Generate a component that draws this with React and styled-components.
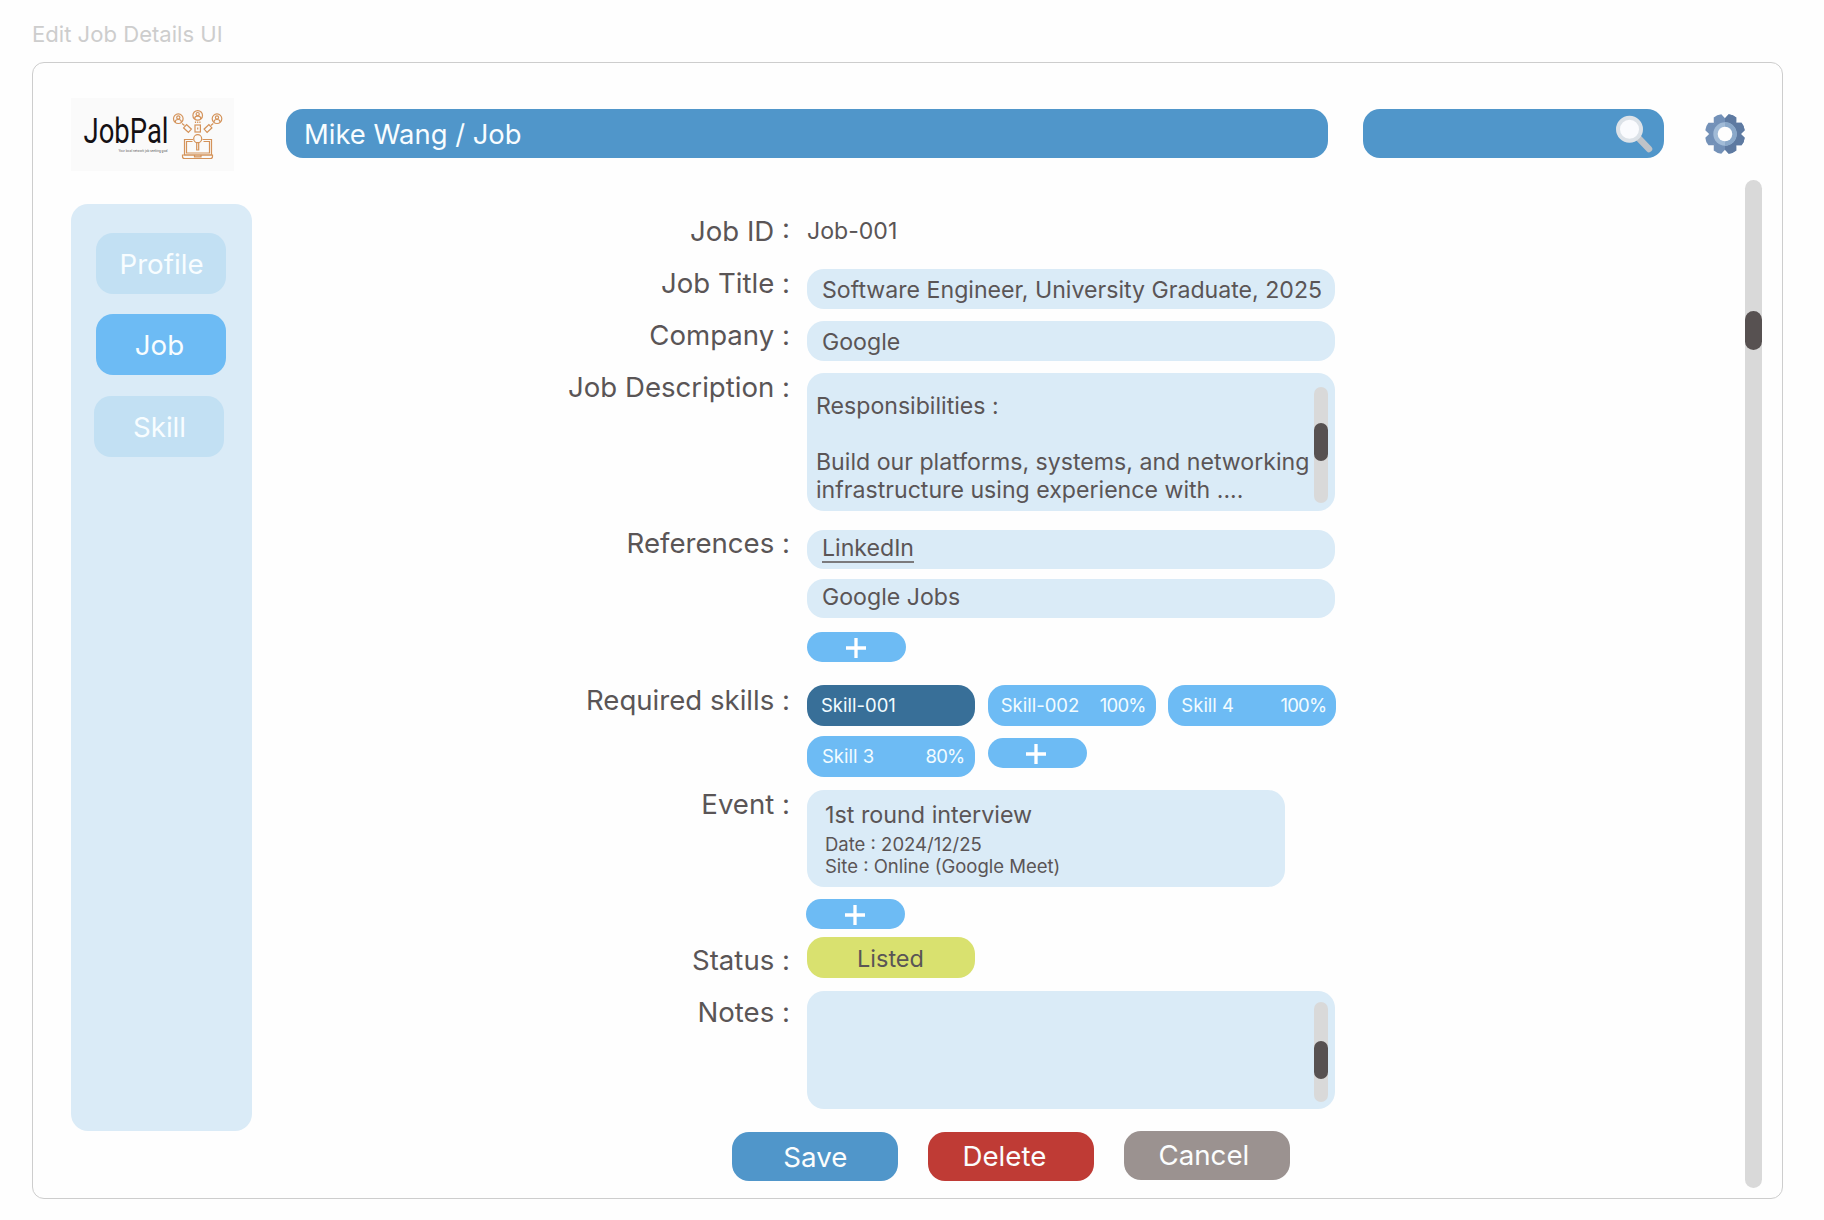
import React from "react";
import styled, { createGlobalStyle } from "styled-components";

const GlobalStyle = createGlobalStyle`
  * { box-sizing: border-box; }
  body {
    margin: 0;
    background: #fefefe;
    color: #5a5556;
    font-family: Inter, "Liberation Sans", sans-serif;
  }
  button { font: inherit; border: 0; padding: 0; cursor: pointer; }
`;

const Screen = styled.div`
  width: 1824px;
  height: 1220px;
  padding: 0 41px 0 32px;
  overflow: hidden;
`;

const ScreenTitle = styled.h1`
  margin: 0;
  height: 62px;
  padding-top: 17px;
  font-size: 22.1px;
  font-weight: 400;
  line-height: 34px;
  color: #cdcdcd;
`;

const Frame = styled.main`
  height: 1137px;
  border: 1px solid #cdcdcd;
  border-radius: 12px;
  padding: 35px 20px 0 38px;
`;

const Header = styled.header`
  display: flex;
  align-items: flex-start;
  height: 73px;
`;

const LogoBox = styled.div`
  width: 163px;
  height: 73px;
  background: #fafafa;
  margin-right: 52px;
`;

const Breadcrumb = styled.div`
  width: 1042px;
  height: 49px;
  margin: 11px 35px 0 0;
  padding-left: 18px;
  border-radius: 17px;
  background: #5096ca;
  color: #f8fdff;
  font-size: 27.4px;
  line-height: 51px;
`;

const SearchBar = styled.div`
  display: flex;
  justify-content: flex-end;
  align-items: center;
  width: 301px;
  height: 49px;
  margin: 11px 41px 0 0;
  padding-right: 10px;
  border-radius: 17px;
  background: #5096ca;
`;

const SettingsButton = styled.button`
  display: flex;
  width: 40px;
  height: 40px;
  margin-top: 16px;
  background: none;
`;

const Body = styled.div`
  display: flex;
  align-items: flex-start;
  padding-top: 9px;
`;

const Sidebar = styled.nav`
  display: flex;
  flex-direction: column;
  gap: 20.3px;
  width: 181.4px;
  height: 927px;
  margin-top: 24px;
  padding: 29px 0 0 25px;
  border-radius: 17px;
  background: #daebf7;
`;

const NavButton = styled.button`
  width: 130px;
  height: 61px;
  border-radius: 17px;
  background: ${(p) => (p.$active ? "#6dbbf4" : "#c2e0f3")};
  color: #f8fdff;
  font-size: 27.7px;
  line-height: 62px;
  margin-left: ${(p) => p.$outdent || 0}px;
  padding: ${(p) => p.$padding || "0 0 0 1px"};
`;

const Form = styled.form`
  width: 1492.6px;
  padding-top: 25px;
`;

const FormRow = styled.section`
  display: grid;
  grid-template-columns: 537.6px 1fr;
  column-gap: 17px;
  height: ${(p) => p.$height}px;
`;

const Label = styled.label`
  padding-top: 9px;
  font-size: 27.6px;
  line-height: 34px;
  text-align: right;
`;

const Content = styled.div`
  display: flex;
  flex-direction: column;
  align-items: flex-start;
  gap: ${(p) => p.$gap || 0}px;
  padding-top: ${(p) => p.$top}px;
`;

const PlainValue = styled.span`
  font-size: 23.1px;
  line-height: 28px;
`;

const Field = styled.div`
  width: 528px;
  height: ${(p) => p.$height || 39}px;
  padding: ${(p) => p.$padTop || 0}px 0 0 15px;
  border-radius: 17px;
  background: #daebf7;
  font-size: 23.13px;
  line-height: ${(p) => p.$line || 39}px;
`;

const LinkText = styled.a`
  display: inline-block;
  height: 33px;
  border-bottom: 2px solid #7b7a7c;
  line-height: 37px;
`;

const TextArea = styled.div`
  display: flex;
  justify-content: space-between;
  width: 528px;
  height: ${(p) => p.$height}px;
  padding: ${(p) => p.$top}px 7px 0 9px;
  border-radius: 17px;
  background: #daebf7;
`;

const Paragraph = styled.div`
  padding-top: 5px;
  font-size: 23.13px;
  line-height: 28px;
  white-space: pre;
`;

const Track = styled.div`
  flex: none;
  width: ${(p) => p.$width}px;
  height: ${(p) => p.$height}px;
  margin-left: auto;
  padding-top: ${(p) => p.$offset}px;
  border-radius: 9px;
  background: #d9d9d9;
`;

const Thumb = styled.div`
  height: ${(p) => p.$height}px;
  border-radius: 9px;
  background: #575151;
`;

const AddButton = styled.button`
  display: flex;
  align-items: center;
  justify-content: center;
  width: 99.5px;
  height: 30px;
  padding: 1px 2px 0 0;
  margin: ${(p) => p.$margin || "0"};
  border-radius: 15px;
  background: #6dbbf4;
`;

const SkillGrid = styled.div`
  display: grid;
  grid-template-columns: repeat(3, 168px);
  gap: 10px 12.7px;
`;

const SkillChip = styled.div`
  display: flex;
  justify-content: space-between;
  height: 41px;
  padding: 0 ${(p) => p.$right || 10}px 0 ${(p) => p.$left || 13}px;
  border-radius: 17px;
  background: ${(p) => (p.$selected ? "#386f98" : "#6dbbf4")};
  color: #f2fcff;
  font-size: 18.5px;
  line-height: 41px;
`;

const Percent = styled.span`
  letter-spacing: -0.8px;
`;

const EventCard = styled.article`
  width: 478.4px;
  height: 97px;
  padding: 10px 0 0 18px;
  border-radius: 17px;
  background: #daebf7;
`;

const EventTitle = styled.div`
  height: 33px;
  font-size: 23.3px;
  line-height: 29px;
`;

const EventLine = styled.div`
  font-size: 18.5px;
  line-height: 22px;
`;

const StatusTag = styled.div`
  width: 168px;
  height: 41px;
  padding-right: 1px;
  border-radius: 17px;
  background: #d9e16f;
  font-size: 23.5px;
  line-height: 43px;
  text-align: center;
`;

const Actions = styled.div`
  display: flex;
  gap: 30px;
  padding: 14px 0 0 480px;
`;

const ActionButton = styled.button`
  width: 166px;
  height: 49px;
  padding: ${(p) => p.$padding};
  margin-top: ${(p) => p.$drop || 0}px;
  border-radius: 17px;
  background: ${(p) => p.$color};
  color: #fbfdfd;
  font-size: 27.7px;
  line-height: 48px;
`;

const Wordmark = styled.text`
  font-family: Roboto, sans-serif;
  font-size: 35px;
  fill: #141014;
`;

const Tagline = styled.text`
  font-family: Inter, sans-serif;
  font-size: 3.6px;
  fill: #555;
`;

const PersonBadge = ({ x, y }) => (
  <g transform={`translate(${x} ${y})`}>
    <circle r="4.8" />
    <circle cy="-1.3" r="1.6" />
    <path d="M-2.9 3.6V2.4Q-2.6.8 0 .8T2.9 2.4V3.6" />
  </g>
);

const Logo = () => (
  <svg width="163" height="73" viewBox="0 0 163 73">
    <Wordmark x="12.500" y="44.500" textLength="85" lengthAdjust="spacingAndGlyphs">JobPal</Wordmark>
    <Tagline x="47.500" y="53.500" textLength="49" lengthAdjust="spacingAndGlyphs">
      Your local network job seeking goal
    </Tagline>
    <g fill="none" stroke="#d4935a" strokeWidth="1.2">
      <PersonBadge x={107.3} y={20.7} />
      <PersonBadge x={126.7} y={17.4} />
      <PersonBadge x={146} y={20.7} />
      <path d="M111 25.500l2.500 2M142.300 25.500l-2.500 2M124.500 23.500v1.500M126.700 23.500v1.500M128.900 23.500v1.500" />
      <rect x="-3.300" y="-2.200" width="6.600" height="4.400" transform="translate(116.500 30.500) rotate(43)" />
      <rect x="-3.300" y="-2.200" width="6.600" height="4.400" transform="translate(137 30.500) rotate(-43)" />
      <rect x="124" y="27" width="5.400" height="7" />
      <path d="M126.700 29.500v2" />
      <path d="M122 41.500h-8.500v15.500h27v-15.500h-9M121.500 43.500h-6v11.500h23v-11.500h-6" />
      <path d="M111.500 57h30v1.500q0 2-2 2h-26q-2 0-2-2zM123.500 57.500v1.300h6.500v-1.300" />
      <circle cx="126.700" cy="40.700" r="4" />
      <path d="M125.700 45v7h2v-7" />
    </g>
  </svg>
);

const SearchIcon = () => (
  <svg width="38" height="38" viewBox="0 0 38 38">
    <path d="M22.500 23l10.500 11" stroke="#bfc3c8" strokeWidth="6.500" strokeLinecap="round" />
    <circle cx="13.500" cy="14.300" r="11.500" fill="#fafbfe" stroke="#dce2e8" strokeWidth="4" />
  </svg>
);

const gearTooth = "M-6.300-14L-4.100-19.600Q0-21 4.100-19.600L6.300-14Z";
const GearIcon = () => (
  <svg width="40" height="40" viewBox="-20 -20 40 40">
    <defs>
      <clipPath id="gear-right"><rect x="0" y="-20" width="20" height="40" /></clipPath>
      <g id="gear-body">
        <circle r="15.300" />
        {[22.5, 67.5, 112.5, 157.5, 202.5, 247.5, 292.5, 337.5].map((a) => (
          <path key={a} d={gearTooth} transform={`rotate(${a})`} />
        ))}
      </g>
    </defs>
    <use href="#gear-body" fill="#7391b8" />
    <use href="#gear-body" fill="#5e7aa1" clipPath="url(#gear-right)" />
    <circle r="11.700" fill="#a1bbd7" />
    <circle r="11.700" fill="#8aa8c9" clipPath="url(#gear-right)" />
    <circle r="7.300" fill="#fefefe" />
  </svg>
);

const PlusIcon = () => (
  <svg width="20" height="20" viewBox="0 0 20 20" stroke="#fff" strokeWidth="3.300">
    <path d="M0 10h20M10 0v20" />
  </svg>
);

const Scrollbar = ({ width = 14, height, offset, thumb }) => (
  <Track $width={width} $height={height} $offset={offset}>
    <Thumb $height={thumb} />
  </Track>
);

const description =
  "Responsibilities :\n\nBuild our platforms, systems, and networking\ninfrastructure using experience with ....";

export default function App() {
  return (
    <Screen>
      <GlobalStyle />
      <ScreenTitle>Edit Job Details UI</ScreenTitle>
      <Frame>
        <Header>
          <LogoBox><Logo /></LogoBox>
          <Breadcrumb>Mike Wang / Job</Breadcrumb>
          <SearchBar><SearchIcon /></SearchBar>
          <SettingsButton><GearIcon /></SettingsButton>
        </Header>
        <Body>
          <Sidebar>
            <NavButton>Profile</NavButton>
            <NavButton $active $padding="0 3px 1px 0">Job</NavButton>
            <NavButton $outdent={-2}>Skill</NavButton>
          </Sidebar>
          <Form>
            <FormRow $height={52}>
              <Label>Job ID :</Label>
              <Content $top={12}><PlainValue>Job-001</PlainValue></Content>
            </FormRow>
            <FormRow $height={52}>
              <Label>Job Title :</Label>
              <Content $top={12}>
                <Field $height={40} $padTop={2}>Software Engineer, University Graduate, 2025</Field>
              </Content>
            </FormRow>
            <FormRow $height={52}>
              <Label>Company :</Label>
              <Content $top={12}><Field $height={40} $padTop={2}>Google</Field></Content>
            </FormRow>
            <FormRow $height={156}>
              <Label>Job Description :</Label>
              <Content $top={12}>
                <TextArea $height={138} $top={14}>
                  <Paragraph>{description}</Paragraph>
                  <Scrollbar height={116} offset={36} thumb={38} />
                </TextArea>
              </Content>
            </FormRow>
            <FormRow $height={157}>
              <Label>References :</Label>
              <Content $top={13} $gap={10}>
                <Field $line={36}><LinkText>LinkedIn</LinkText></Field>
                <Field $line={36}>Google Jobs</Field>
                <AddButton $margin="4px 0 0" type="button"><PlusIcon /></AddButton>
              </Content>
            </FormRow>
            <FormRow $height={104}>
              <Label>Required skills :</Label>
              <Content $top={11}>
                <SkillGrid>
                  <SkillChip $selected $left={14}>Skill-001</SkillChip>
                  <SkillChip>Skill-002<Percent>100%</Percent></SkillChip>
                  <SkillChip>Skill 4<Percent>100%</Percent></SkillChip>
                  <SkillChip $left={15} $right={10.5}>Skill 3<Percent>80%</Percent></SkillChip>
                  <AddButton $margin="2px 0 0" type="button"><PlusIcon /></AddButton>
                </SkillGrid>
              </Content>
            </FormRow>
            <FormRow $height={156}>
              <Label>Event :</Label>
              <Content $top={12} $gap={12}>
                <EventCard>
                  <EventTitle>1st round interview</EventTitle>
                  <EventLine>Date : 2024/12/25</EventLine>
                  <EventLine>Site : Online (Google Meet)</EventLine>
                </EventCard>
                <AddButton $margin="0 0 0 -1px" type="button"><PlusIcon /></AddButton>
              </Content>
            </FormRow>
            <FormRow $height={52}>
              <Label>Status :</Label>
              <Content $top={3}><StatusTag>Listed</StatusTag></Content>
            </FormRow>
            <FormRow $height={131}>
              <Label>Notes :</Label>
              <Content $top={5}>
                <TextArea $height={118} $top={11}>
                  <Scrollbar height={100} offset={39} thumb={38} />
                </TextArea>
              </Content>
            </FormRow>
            <Actions>
              <ActionButton type="button" $color="#5096ca" $padding="1px 0 0" $drop={1}>Save</ActionButton>
              <ActionButton type="button" $color="#bf3b35" $padding="0 14px 2px 0" $drop={1}>Delete</ActionButton>
              <ActionButton type="button" $color="#9b9290" $padding="0 7px 2px 0">Cancel</ActionButton>
            </Actions>
          </Form>
          <Scrollbar width={17} height={1008} offset={131} thumb={39} />
        </Body>
      </Frame>
    </Screen>
  );
}
